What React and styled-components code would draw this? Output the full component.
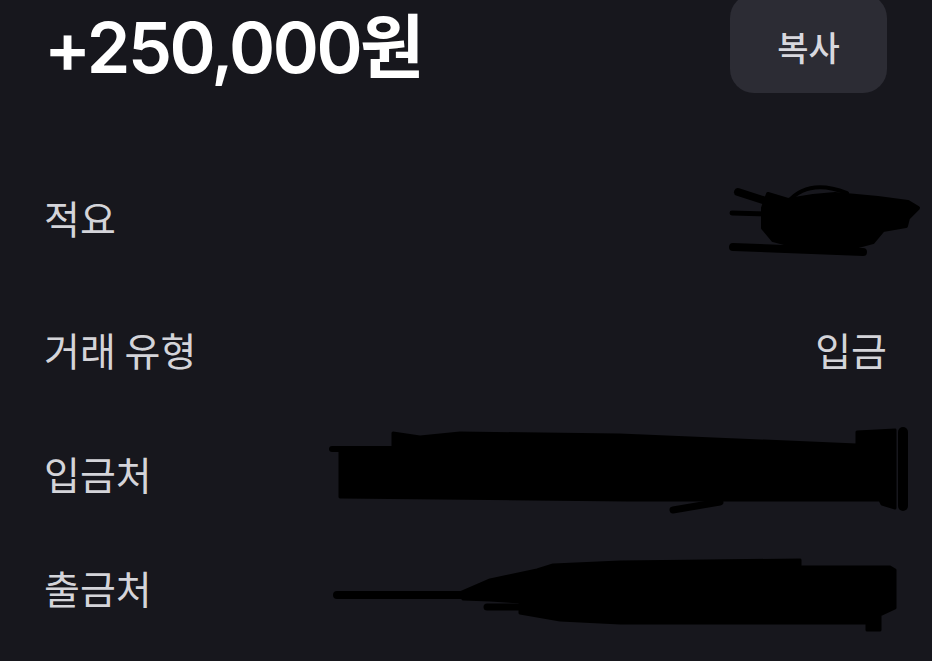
import React from "react"
import styled, {createGlobalStyle} from "styled-components"

const GlobalStyle = createGlobalStyle`
    html, body {
        margin: 0;
        padding: 0;
        background-color: #17171d;
    }
    * {
        box-sizing: border-box;
    }
`

const colors = {
    bg: "#17171d",
    white: "#ffffff",
    label: "#d4d4d9",
    button: "#2c2c34",
    ink: "#030304",
}

const Page = styled.div`
    width: 932px;
    height: 661px;
    overflow: hidden;
    padding: 0 45px 0 44px;
    background-color: ${colors.bg};
    font-family: "Noto Sans CJK KR", "Noto Sans", sans-serif;
`

const Header = styled.div`
    display: flex;
    align-items: center;
    justify-content: space-between;
    height: 93px;
`

const Amount = styled.h1`
    margin: 2px 0 0 0;
    font-family: "Inter", "Noto Sans CJK KR", sans-serif;
    font-size: 70px;
    font-weight: 600;
    letter-spacing: -2.5px;
    line-height: 84px;
    color: ${colors.white};
`

const CopyButton = styled.button`
    display: flex;
    align-items: center;
    justify-content: center;
    align-self: flex-start;
    width: 157px;
    height: 99px;
    margin-top: -6px;
    padding: 6px 0 0;
    border: none;
    border-radius: 24px;
    background-color: ${colors.button};
    color: #d8d8de;
    font-family: "Noto Sans CJK KR", sans-serif;
    font-size: 34px;
    font-weight: 500;
    cursor: pointer;
`

const List = styled.div`
    display: flex;
    flex-direction: column;
    margin-top: 58px;
`

const Row = styled.div`
    display: flex;
    align-items: center;
    justify-content: space-between;
    height: ${props => props.$h}px;
`

const Label = styled.span`
    font-size: 39px;
    font-weight: 400;
    color: ${colors.label};
`

const Value = styled.span`
    font-size: 39px;
    font-weight: 400;
    color: ${colors.label};
`

const Redaction = styled.svg`
    flex-shrink: 0;
    margin-right: -${props => props.$over}px;
    transform: translateY(${props => props.$dy}px);
    overflow: visible;
`

const Ink = ({children}) => (
    <g fill={colors.ink} stroke={colors.ink} strokeLinecap="round" strokeLinejoin="round" filter="url(#soft)">
        {children}
    </g>
)

const Soft = () => (
    <defs>
        <filter id="soft" x="-5%" y="-20%" width="110%" height="140%">
            <feGaussianBlur stdDeviation="0.7"/>
        </filter>
    </defs>
)

const MemoScribble = () => (
    <Redaction width="192" height="78" viewBox="0 0 192 78" $over={33} $dy={2}>
        <Soft/>
        <Ink>
            <line x1="10" y1="12" x2="44" y2="23" strokeWidth="8"/>
            <line x1="4" y1="33" x2="42" y2="34" strokeWidth="5"/>
            <path d="M60 22 Q80 -2 119 13" fill="none" strokeWidth="4"/>
            <polygon
                points="40,14 60,20 85,16 107,14 150,18 180,22 190,28 180,38 178,46 155,50 145,62 115,70 75,68 45,60 35,48 35,28"
                strokeWidth="4"
            />
            <line x1="5" y1="67" x2="135" y2="72" strokeWidth="8"/>
        </Ink>
    </Redaction>
)

const DepositScribble = () => (
    <Redaction width="586" height="90" viewBox="0 0 586 90" $over={25} $dy={-4}>
        <Soft/>
        <Ink>
            <line x1="6" y1="25" x2="67" y2="25" strokeWidth="6"/>
            <polygon
                points="14,25 67,25 67,9 94,13 134,9 294,11 531,21 531,8 569,6 569,84 556,80 554,76 400,76 300,76 14,73"
                strokeWidth="3"
            />
            <line x1="577" y1="8" x2="577" y2="82" strokeWidth="10"/>
            <line x1="347" y1="86" x2="394" y2="78" strokeWidth="7"/>
        </Ink>
    </Redaction>
)

const WithdrawScribble = () => (
    <Redaction width="570" height="83" viewBox="0 0 570 83" $over={13} $dy={9}>
        <Soft/>
        <Ink>
            <line x1="7" y1="40" x2="133" y2="40" strokeWidth="8"/>
            <line x1="157" y1="52" x2="195" y2="52" strokeWidth="7"/>
            <polygon
                points="130,38 160,25 207,15 223,10 290,7 470,5 470,12 560,12 565,15 565,53 550,60 550,75 537,75 537,68 290,68 230,65 190,58 190,47 160,45 133,44"
                strokeWidth="3"
            />
        </Ink>
    </Redaction>
)

const rows = [
    {label: "적요", h: 132, value: <MemoScribble/>},
    {label: "거래 유형", h: 132, value: <Value>입금</Value>},
    {label: "입금처", h: 116, value: <DepositScribble/>},
    {label: "출금처", h: 112, value: <WithdrawScribble/>},
]

const App = () => {
    return (
        <Page>
            <GlobalStyle/>
            <Header>
                <Amount>+250,000원</Amount>
                <CopyButton>복사</CopyButton>
            </Header>
            <List>
                {rows.map(row => (
                    <Row key={row.label} $h={row.h}>
                        <Label>{row.label}</Label>
                        {row.value}
                    </Row>
                ))}
            </List>
        </Page>
    )
}

export default App
